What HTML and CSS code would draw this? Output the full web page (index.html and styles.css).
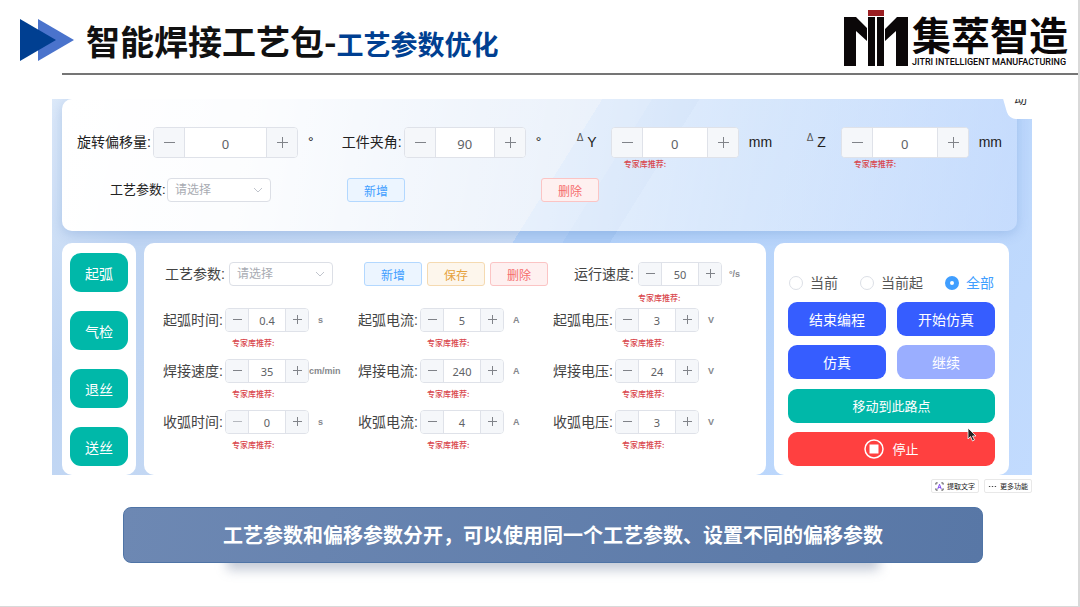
FILE: index.html
```html
<!DOCTYPE html>
<html lang="zh-CN">
<head>
    <meta charset="UTF-8">
    <meta name="viewport" content="width=device-width,initial-scale=1.0">
    <title>智能焊接工艺包</title>
    <link rel="stylesheet" href="styles.css">
</head>
<body>
    <div class="slide">

        <header class="header">
            <svg class="arrows" viewBox="0 0 54 42" aria-hidden="true">
                <path d="M18 0L54 21L18 42Z" fill="#4a73cc"/>
                <path d="M0 0L36 21L0 42Z" fill="#003f91"/>
            </svg>
            <div class="title-line">
                <h1>智能焊接工艺包-<span>工艺参数优化</span></h1>
                <div class="logo">
                    <svg class="logo-mark" viewBox="0 0 64 58" aria-hidden="true">
                        <path d="M24 1h16v6H24z" fill="#9b1f23"/>
                        <path d="M0 8h12l11 11v13L12 22v35H0z" fill="#0b0708"/>
                        <path d="M24 8h7v49h-7zM33 8h7v49h-7z" fill="#0b0708"/>
                        <path d="M41 20L53 8h11v49H52V22L41 32z" fill="#0b0708"/>
                    </svg>
                    <div class="logo-text">
                        <strong>集萃智造</strong>
                        <small>JITRI INTELLIGENT MANUFACTURING</small>
                    </div>
                </div>
            </div>
        </header>

        <main class="content">
            <div class="panel">
                <div class="tab"><span>动</span></div>

                <section class="card offset-card">
                    <div class="offset-row">
                        <div class="field">
                            <label for="rot">旋转偏移量:</label>
                            <div class="num num-big num-wide"><button aria-label="减"></button><input id="rot" value="0"><button class="plus" aria-label="加"></button></div>
                            <span class="deg">°</span>
                        </div>
                        <div class="field">
                            <label for="angle">工件夹角:</label>
                            <div class="num num-big"><button aria-label="减"></button><input id="angle" value="90"><button class="plus" aria-label="加"></button></div>
                            <span class="deg">°</span>
                        </div>
                        <div class="field">
                            <label class="axis" for="dy"><sup>Δ</sup> Y</label>
                            <div class="num-box">
                                <div class="num num-big num-mid"><button aria-label="减"></button><input id="dy" value="0"><button class="plus" aria-label="加"></button></div>
                                <span class="hint">专家库推荐:</span>
                            </div>
                            <span class="mm">mm</span>
                        </div>
                        <div class="field">
                            <label class="axis" for="dz"><sup>Δ</sup> Z</label>
                            <div class="num-box">
                                <div class="num num-big num-mid"><button aria-label="减"></button><input id="dz" value="0"><button class="plus" aria-label="加"></button></div>
                                <span class="hint">专家库推荐:</span>
                            </div>
                            <span class="mm">mm</span>
                        </div>
                    </div>
                    <div class="offset-tools">
                        <label for="craft1">工艺参数:</label>
                        <div class="select">
                            <select id="craft1"><option>请选择</option></select>
                            <svg viewBox="0 0 10 6" aria-hidden="true"><path d="M1 1l4 4 4-4"/></svg>
                        </div>
                        <button class="btn btn-add">新增</button>
                        <button class="btn btn-del">删除</button>
                    </div>
                </section>

                <div class="lower">
                    <nav class="card side">
                        <button>起弧</button>
                        <button>气检</button>
                        <button>退丝</button>
                        <button>送丝</button>
                    </nav>

                    <section class="card params">
                        <div class="params-top">
                            <label for="craft2">工艺参数:</label>
                            <div class="select">
                                <select id="craft2"><option>请选择</option></select>
                                <svg viewBox="0 0 10 6" aria-hidden="true"><path d="M1 1l4 4 4-4"/></svg>
                            </div>
                            <div class="btns">
                                <button class="btn btn-add">新增</button>
                                <button class="btn btn-save">保存</button>
                                <button class="btn btn-del">删除</button>
                            </div>
                            <label for="speed">运行速度:</label>
                            <div class="num-box">
                                <div class="num"><button aria-label="减"></button><input id="speed" value="50"><button class="plus" aria-label="加"></button></div>
                                <span class="hint">专家库推荐:</span>
                            </div>
                            <span class="unit">°/s</span>
                        </div>
                        <div class="params-grid" id="grid"></div>
                    </section>

                    <section class="card actions">
                        <div class="radios">
                            <label><input type="radio" name="range">当前</label>
                            <label><input type="radio" name="range">当前起</label>
                            <label><input type="radio" name="range" checked>全部</label>
                        </div>
                        <button>结束编程</button>
                        <button>开始仿真</button>
                        <button>仿真</button>
                        <button disabled>继续</button>
                        <button class="move">移动到此路点</button>
                        <button class="stop">
                            <svg viewBox="0 0 20 20" aria-hidden="true"><circle cx="10" cy="10" r="9" fill="none" stroke="#fff" stroke-width="1.5"/><path d="M5.500 5.500h9v9h-9z" fill="#fff"/></svg>
                            停止
                        </button>
                        <svg class="cursor" viewBox="0 0 10 15" aria-hidden="true"><path d="M1 1v11l2.500-2.500L5.500 14l2-1-2-4H9z" fill="#222" stroke="#fff" stroke-width=".8"/></svg>
                    </section>
                </div>
            </div>

            <div class="tools">
                <button>
                    <svg viewBox="0 0 10 10" aria-hidden="true"><path d="M1 3V1h2M7 1h2v2M9 7v2H7M3 9H1V7" stroke="#444"/><path d="M3 8l2-5.500L7 8M3.500 6h3" stroke="#7a3ff2"/></svg>
                    提取文字
                </button>
                <button>
                    <svg viewBox="0 0 10 10" aria-hidden="true"><path d="M1 5h1.500M4.250 5h1.500M7.500 5H9" stroke="#333"/></svg>
                    更多功能
                </button>
            </div>
        </main>

        <p class="banner">工艺参数和偏移参数分开，可以使用同一个工艺参数、设置不同的偏移参数</p>
    </div>

    <script>
        let params=[
            ['起弧时间','0.4','s'],['起弧电流','5','A'],['起弧电压','3','V'],
            ['焊接速度','35','cm/min'],['焊接电流','240','A'],['焊接电压','24','V'],
            ['收弧时间','0','s'],['收弧电流','4','A'],['收弧电压','3','V']
        ];
        let html='';
        for (let i=0;i<params.length;i++){
            let p=params[i];
            let wide=p[2].length>1 ? ' unit-wide' : '';
            html+='<div class="param">';
            html+='<label for="p'+i+'">'+p[0]+':</label>';
            html+='<div class="num-box"><div class="num">';
            html+='<button aria-label="减"'+(p[1]==='0' ? ' disabled' : '')+'></button>';
            html+='<input id="p'+i+'" value="'+p[1]+'">';
            html+='<button class="plus" aria-label="加"></button></div>';
            html+='<span class="hint">专家库推荐:</span></div>';
            html+='<span class="unit'+wide+'">'+p[2]+'</span>';
            html+='</div>';
        }
        document.getElementById('grid').innerHTML=html;
    </script>
</body>
</html>
```
FILE: styles.css
```css
*{
    box-sizing:border-box;
}

body{
    margin:0;
    background:#fff;
    color:#303133;
    font-family:"Liberation Sans","Noto Sans CJK SC",sans-serif;
    font-size:14px;
}

button,input,select{
    font-family:inherit;
    margin:0;
    padding:0;
}

.slide{
    position:relative;
    z-index:0;
    min-height:100vh;
    border-right:2px solid #d9d9d9;
    border-bottom:1px solid #d9d9d9;
}

/* header */
.header{
    display:flex;
    align-items:flex-start;
    padding-left:20px;
}

.arrows{
    width:54px;
    height:42px;
    margin:19px -12px 0 0;
}

.title-line{
    flex:1;
    display:flex;
    justify-content:space-between;
    height:75px;
    padding:0 10px 0 24px;
    border-bottom:2px solid #757575;
}

h1{
    margin:17px 0 0;
    color:#111;
    font-family:"Noto Sans CJK SC",sans-serif;
    font-size:34px;
    line-height:48px;
}

h1 span{
    color:#003f91;
    font-size:27px;
}

.logo{
    display:flex;
    gap:4px;
    padding-top:9px;
}

.logo-mark{
    width:64px;
    height:58px;
}

.logo-text{
    display:flex;
    flex-direction:column;
    padding-top:7px;
    color:#0b0708;
}

.logo-text strong{
    font-size:39px;
    font-weight:bold;
    line-height:41px;
}

.logo-text small{
    font-family:Roboto,"Liberation Sans",sans-serif;
    font-size:9px;
    font-weight:500;
    line-height:10px;
    white-space:nowrap;
}

/* control panel */
.content{
    padding:24px 46px 0 52px;
}

.panel{
    position:relative;
    overflow:hidden;
    padding:0 15px 0 10px;
    background:linear-gradient(122deg,#dce9f9 0%,#bfd5f3 14%,#c9dbf4 45.3%,#b3d0f6 45.3%,#b3d0f6 49.4%,#abcbf5 49.4%,#abcbf5 53.3%,#b4d2f9 53.3%,#c2dbfe 100%);
}

.tab{
    position:absolute;
    top:0;
    right:0;
    width:26px;
    height:20px;
}

.tab::before{
    content:"";
    position:absolute;
    inset:0 -20px 0 0;
    background:#fff;
    border-bottom-left-radius:7px;
    transform:skewX(16deg);
}

.tab span{
    position:absolute;
    left:8px;
    top:-9px;
    font-size:13px;
    line-height:18px;
}

.card{
    border-radius:10px;
    background:#fff;
}

.offset-card{
    height:132px;
    padding:28px 15px 0;
    background:linear-gradient(100deg,#fff 0%,rgba(255,255,255,.95) 20%,rgba(255,255,255,.68) 50%,rgba(255,255,255,.42) 75%,rgba(205,223,255,.5) 100%);
    box-shadow:0 3px 12px rgba(70,120,190,.25);
    color:#222;
}

.offset-row{
    display:grid;
    grid-template-columns:266fr 234fr 231fr 194fr;
}

.field,.param,.params-top,.offset-tools{
    display:flex;
    align-items:flex-start;
}

.field label,.field .mm{
    line-height:30px;
    white-space:nowrap;
}

.field label{
    padding-right:2px;
}

.field .axis{
    min-width:36px;
    padding-left:2px;
}

.axis sup{
    font-size:10px;
    line-height:10px;
    color:#555;
}

.deg{
    margin-left:10px;
    line-height:30px;
}

.mm{
    margin-left:10px;
}

.num{
    display:flex;
    width:84px;
    height:24px;
    border:1px solid #dfe2e9;
    border-radius:4px;
    overflow:hidden;
    background:#fff;
}

.num input{
    flex:1;
    min-width:0;
    border:0;
    background:#fff;
    color:#606266;
    font-family:"Noto Sans",sans-serif;
    font-size:11px;
    text-align:center;
    outline:0;
}

.num button{
    position:relative;
    width:23px;
    border:0;
    border-right:1px solid #dfe2e9;
    background:#f5f7fa;
    color:#808389;
}

.num .plus{
    border-right:0;
    border-left:1px solid #dfe2e9;
}

.num button:disabled{
    color:#b5b8be;
}

.num button::before,.num .plus::after{
    content:"";
    position:absolute;
    top:50%;
    left:50%;
    width:9px;
    height:1px;
    margin:-1px 0 0 -4px;
    background:currentColor;
}

.num .plus::after{
    width:1px;
    height:9px;
    margin:-5px 0 0 0;
}

.num-big{
    width:122px;
    height:31px;
}

.num-big button{
    width:31px;
}

.num-big button::before{
    width:11px;
    margin-left:-5px;
}

.num-big .plus::after{
    height:11px;
    margin-top:-6px;
}

.num-big input{
    padding-top:2px;
    font-size:13px;
}

.num-wide{
    width:145px;
}

.num-mid{
    width:128px;
}

.hint{
    display:block;
    color:#d9464c;
    font-family:"Noto Sans CJK SC",sans-serif;
    font-size:8px;
    font-weight:500;
    line-height:12px;
    white-space:nowrap;
}

.field .num-box{
    height:51px;
}

.field .hint{
    padding-left:13px;
}

.offset-tools{
    padding-left:33px;
}

.offset-tools label{
    width:57px;
    font-size:13px;
    line-height:24px;
    white-space:nowrap;
}

.offset-tools .btn-add{
    margin-left:76px;
}

.offset-tools .btn-del{
    margin-left:136px;
}

.select{
    position:relative;
    width:104px;
    height:24px;
}

.select select{
    width:100%;
    height:100%;
    padding-left:7px;
    border:1px solid #dcdfe6;
    border-radius:4px;
    background:#fff;
    color:#a8abb2;
    font-size:12px;
    appearance:none;
}

.select svg{
    position:absolute;
    right:8px;
    top:9px;
    width:10px;
    height:6px;
    fill:none;
    stroke:#c0c4cc;
}

.btn{
    width:58px;
    height:24px;
    border:1px solid;
    border-radius:3px;
    font-size:12px;
}

.btn-add{
    color:#409eff;
    background:#ecf5ff;
    border-color:#b3d8ff;
}

.btn-save{
    color:#e6a23c;
    background:#fdf6ec;
    border-color:#f5dab1;
}

.btn-del{
    color:#f56c6c;
    background:#fef0f0;
    border-color:#fbc4c4;
}

/* lower cards */
.lower{
    display:grid;
    grid-template-columns:74px 622fr 235fr;
    gap:8px;
    padding:12px 8px 0 0;
}

.side{
    display:flex;
    flex-direction:column;
    gap:19px;
    padding:10px 8px 9px;
}

.side button{
    height:39px;
    border:0;
    border-radius:11px;
    background:#00b8a9;
    color:#fff;
    font-size:14px;
}

.params{
    padding:19px 18px 0 19px;
    color:#444;
}

.params-top{
    height:46px;
    padding-left:2px;
}

.params label{
    flex:none;
    width:62px;
    line-height:25px;
    white-space:nowrap;
}

.params-top > label{
    width:64px;
}

.btns{
    display:flex;
    gap:5px;
    margin:0 26px 0 31px;
}

.params-top .hint{
    padding-top:5px;
    line-height:14px;
}

.params-grid{
    display:grid;
    grid-template-columns:repeat(3,1fr);
    row-gap:10px;
}

.param .hint{
    padding:5px 0 0 7px;
}

.unit{
    margin-left:9px;
    color:#85878c;
    font-size:9px;
    font-weight:bold;
    line-height:24px;
}

.params-top .unit{
    margin-left:7px;
}

.unit-wide{
    margin-left:0;
}

/* actions */
.actions{
    position:relative;
    display:grid;
    grid-template-columns:1fr 1fr;
    grid-template-rows:24px;
    gap:9px 11px;
    padding:26px 14px 9px;
}

.actions .radios{
    grid-column:1 / 3;
    display:flex;
    justify-content:space-between;
    align-items:center;
    padding:4px 1px 0 1px;
}

.radios label{
    display:flex;
    align-items:center;
    gap:7px;
    color:#555;
    line-height:24px;
}

.radios label:last-child{
    color:#409eff;
}

.radios input{
    width:14px;
    height:14px;
    border:1px solid #dcdfe6;
    border-radius:50%;
    background:#fff;
    appearance:none;
}

.radios input:checked{
    border:5px solid #409eff;
}

.actions button{
    height:34px;
    border:0;
    border-radius:9px;
    background:#365dff;
    color:#fff;
    font-size:14px;
}

.actions button:disabled{
    background:#9aaeff;
}

.actions .move,.actions .stop{
    grid-column:1 / 3;
}

.actions .move{
    background:#00b8a9;
    font-size:13px;
}

.actions .stop{
    display:flex;
    align-items:center;
    justify-content:center;
    gap:8px;
    background:#ff4040;
    font-size:13px;
}

.stop svg{
    width:20px;
    height:20px;
}

.cursor{
    position:absolute;
    right:32px;
    bottom:33px;
    width:10px;
    height:15px;
}

.tools{
    display:flex;
    justify-content:flex-end;
    gap:5px;
    padding-top:4px;
}

.tools button{
    display:flex;
    align-items:center;
    justify-content:center;
    gap:3px;
    width:48px;
    height:14px;
    border:1px solid #e8e8e8;
    border-radius:2px;
    background:#fff;
    color:#222;
    font-size:7px;
    white-space:nowrap;
}

.tools svg{
    width:9px;
    height:9px;
    fill:none;
}

/* bottom banner */
.banner{
    position:relative;
    margin:14px 95px 0 123px;
    padding:14px 0;
    border:1px solid #4f74a6;
    border-radius:8px;
    background:linear-gradient(100deg,#6d88b3,#5877a6);
    color:#fff;
    font-family:"Noto Sans CJK SC",sans-serif;
    font-size:20px;
    font-weight:bold;
    line-height:26px;
    text-align:center;
}

.banner::after{
    content:"";
    position:absolute;
    z-index:-1;
    left:12%;
    right:12%;
    bottom:-8px;
    height:20px;
    background:rgba(60,80,120,.3);
    filter:blur(6px);
}
```
